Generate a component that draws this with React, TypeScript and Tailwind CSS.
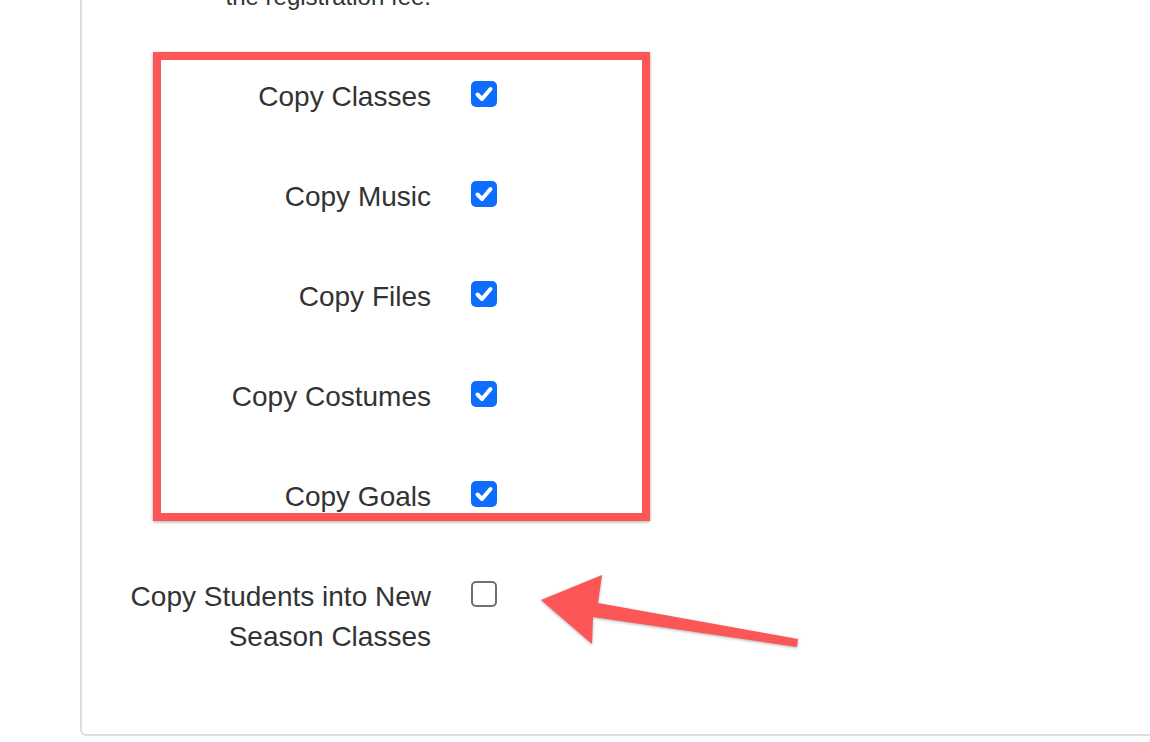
import React from "react";

function Check({ checked }: { checked: boolean }) {
  if (checked) {
    return (
      <span className="mt-[6px] flex h-[26px] w-[26px] shrink-0 items-center justify-center rounded-[5px] bg-[#0d6efd]">
        <svg width="26" height="26" viewBox="0 0 26 26">
          <path d="M6.5 13.5 L11 18 L19.5 8" fill="none" stroke="#fff" strokeWidth="4" strokeLinecap="round" strokeLinejoin="round" />
        </svg>
      </span>
    );
  }
  return <span className="mt-[6px] block h-[26px] w-[26px] shrink-0 rounded-[5px] border-2 border-[#707070] bg-white" />;
}

function Row({ label, checked, first }: { label: React.ReactNode; checked?: boolean; first?: boolean }) {
  return (
    <div className={`flex items-start gap-[40px] ${first ? "-mt-[25px]" : ""}`}>
      <div
        className={`-mb-[2px] w-[331px] pt-[2px] text-right leading-[40px] text-[#333] ${
          first ? "text-[24px]" : "text-[28px]"
        }`}
      >
        {label}
      </div>
      {checked !== undefined && <Check checked={checked} />}
    </div>
  );
}

export default function App() {
  return (
    <div
      className="relative h-[742px] w-[1150px] overflow-hidden bg-white"
      style={{ fontFamily: '"Liberation Sans", Arial, sans-serif' }}
    >
      <div className="ml-[80px] w-[1100px] rounded-bl-[6px] border-b-2 border-l-2 border-[#dedede] pb-[79px] pl-[18px]">
        <div className="flex flex-col gap-[60px]">
          <Row first label="the registration fee." />
          <Row label="Copy Classes" checked />
          <Row label="Copy Music" checked />
          <Row label="Copy Files" checked />
          <Row label="Copy Costumes" checked />
          <Row label="Copy Goals" checked />
          <Row
            label={
              <>
                Copy Students into New
                <br />
                Season Classes
              </>
            }
            checked={false}
          />
        </div>
      </div>

      <div className="pointer-events-none absolute left-[153px] top-[52px] h-[469px] w-[497px] border-[8px] border-[#fd5656] shadow-[0_1px_3px_rgba(0,0,0,0.35)]" />

      <svg
        className="pointer-events-none absolute left-0 top-0"
        width="1150"
        height="742"
        viewBox="0 0 1150 742"
        style={{ filter: "drop-shadow(0 1px 1.5px rgba(0,0,0,0.3))" }}
      >
        <polygon
          points="541,600 602,575 598,603 798,639 797,647 593,617 592,644"
          fill="#fd5656"
        />
      </svg>
    </div>
  );
}
